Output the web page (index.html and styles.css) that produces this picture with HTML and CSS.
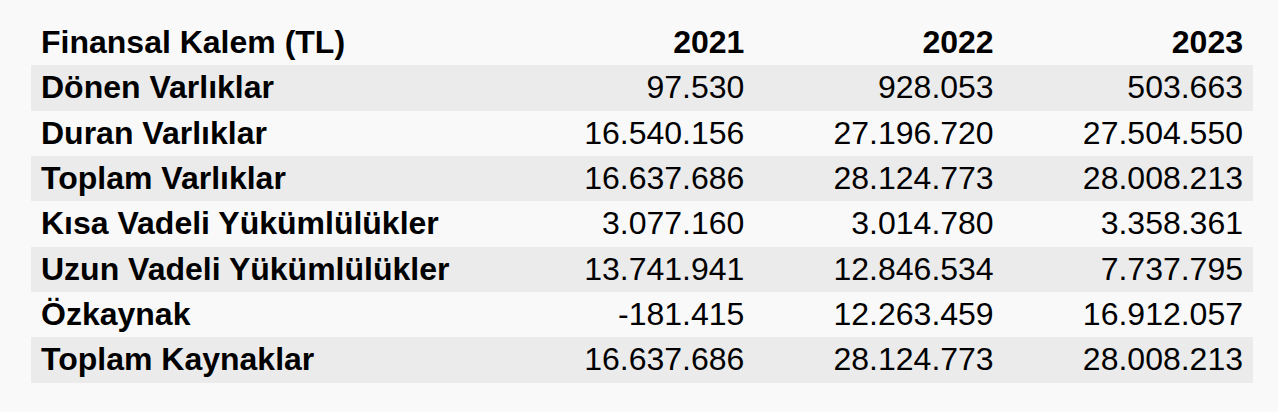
FILE: index.html
```html
<!DOCTYPE html>
<html lang="tr">
<head>
<meta charset="utf-8">
<title>Finansal Tablo</title>
<link rel="stylesheet" href="styles.css">
</head>
<body>
<table class="fin-table">
  <thead>
    <tr><th class="label">Finansal Kalem (TL)</th><th>2021</th><th>2022</th><th>2023</th></tr>
  </thead>
  <tbody>
    <tr><td class="label">Dönen Varlıklar</td><td>97.530</td><td>928.053</td><td>503.663</td></tr>
    <tr><td class="label">Duran Varlıklar</td><td>16.540.156</td><td>27.196.720</td><td>27.504.550</td></tr>
    <tr><td class="label">Toplam Varlıklar</td><td>16.637.686</td><td>28.124.773</td><td>28.008.213</td></tr>
    <tr><td class="label">Kısa Vadeli Yükümlülükler</td><td>3.077.160</td><td>3.014.780</td><td>3.358.361</td></tr>
    <tr><td class="label">Uzun Vadeli Yükümlülükler</td><td>13.741.941</td><td>12.846.534</td><td>7.737.795</td></tr>
    <tr><td class="label">Özkaynak</td><td>-181.415</td><td>12.263.459</td><td>16.912.057</td></tr>
    <tr><td class="label">Toplam Kaynaklar</td><td>16.637.686</td><td>28.124.773</td><td>28.008.213</td></tr>
  </tbody>
</table>
</body>
</html>
```
FILE: styles.css
```css
html, body {
  margin: 0;
  background: #f9f9f9;
}
body {
  padding: 20px 25px 0 31px;
  font-family: "Liberation Sans", Arial, Helvetica, sans-serif;
  color: #000;
}
.fin-table {
  border-collapse: collapse;
  width: 1222px;
  table-layout: fixed;
  font-size: 32px;
  line-height: 37px;
}
.fin-table th,
.fin-table td {
  padding: 4px 10px 4.33px;
  text-align: right;
  white-space: nowrap;
  font-weight: normal;
}
.fin-table th {
  font-weight: bold;
}
.fin-table .label {
  text-align: left;
  font-weight: bold;
  width: 474px;
  box-sizing: border-box;
}
.fin-table tbody tr:nth-child(odd) {
  background: #ebebeb;
}
```
